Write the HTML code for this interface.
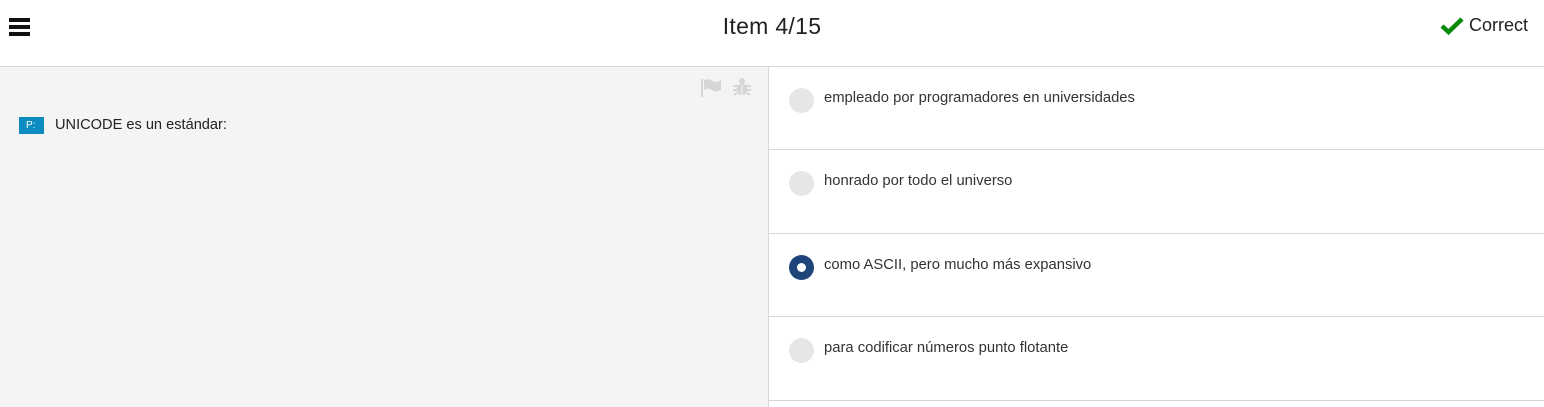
<!DOCTYPE html>
<html><head><style>
*{margin:0;padding:0;box-sizing:border-box}
body{width:1544px;height:407px;overflow:hidden;font-family:"Liberation Sans",sans-serif;background:#fff;color:#333;position:relative}
.hdr{position:absolute;left:0;top:0;width:1544px;height:67px;border-bottom:1px solid #d8d8d8;background:#fff}
.title{position:absolute;left:0;width:1544px;top:13px;text-align:center;font-size:23px;color:#222;letter-spacing:0.3px}
.ham{position:absolute;left:9px;top:18px;width:21px}
.ham i{display:block;height:4px;background:#111;margin-bottom:3px}
.corr{position:absolute;right:16px;top:15px;font-size:18px;color:#222;display:flex;align-items:center}
.left{position:absolute;left:0;top:67px;width:769px;height:340px;background:#f4f4f4;border-right:1px solid #d8d8d8}
.p{position:absolute;left:19px;top:50px;width:25px;height:17px;background:#0b8bc0;color:#fff;font-size:10px;line-height:17px;padding-left:7px;display:flex;align-items:center}
.q{position:absolute;left:55px;top:49px;font-size:14.6px;line-height:18px;color:#222}
.row{position:absolute;left:769px;width:775px;border-bottom:1px solid #d8d8d8}
.rad{position:absolute;left:20px;top:21px;width:25px;height:25px;border-radius:50%;background:#e6e6e6}
.rad.on{background:#1f4479}
.rad.on:after{content:"";position:absolute;left:8px;top:8px;width:9px;height:9px;border-radius:50%;background:#fff}
.lbl{position:absolute;left:55px;top:23px;font-size:14.8px;color:#333}
</style></head><body>
<div class="hdr">
<div class="ham"><i></i><i></i><i></i></div>
<div class="title">Item 4/15</div>
<div class="corr"><svg width="24" height="20" viewBox="0 0 24 20"><path d="M2 10 L8.5 16 L22 3" fill="none" stroke="#0a8a0a" stroke-width="4.5"/></svg><span style="margin-left:5px">Correct</span></div>
</div>
<div class="left">
<svg style="position:absolute;left:700px;top:11px" width="22" height="20" viewBox="0 0 22 20"><rect x="1" y="1" width="2" height="18" fill="#d6d6d6"/><path d="M4 2 Q8 0 12 3 Q16 5 21 2 L21 12 Q16 15 12 12 Q8 9 4 12Z" fill="#d6d6d6"/></svg>
<svg style="position:absolute;left:732px;top:10px" width="20" height="21" viewBox="0 0 20 21"><circle cx="10" cy="4" r="3" fill="#d6d6d6"/><rect x="5" y="7" width="10" height="11" rx="4" fill="#d6d6d6"/><path d="M1 9h18M1 13h18M2 18l3-2M18 18l-3-2" stroke="#d6d6d6" stroke-width="2"/><rect x="9.5" y="8" width="1" height="10" fill="#f4f4f4"/></svg>
<div class="p">P:</div>
<div class="q">UNICODE es un estándar:</div>
</div>
<div class="row" style="top:67px;height:83px"><div class="rad"></div><div class="lbl">empleado por programadores en universidades</div></div>
<div class="row" style="top:150px;height:84px"><div class="rad"></div><div class="lbl">honrado por todo el universo</div></div>
<div class="row" style="top:234px;height:83px"><div class="rad on"></div><div class="lbl">como ASCII, pero mucho más expansivo</div></div>
<div class="row" style="top:317px;height:84px"><div class="rad"></div><div class="lbl">para codificar números punto flotante</div></div>
</body></html>
